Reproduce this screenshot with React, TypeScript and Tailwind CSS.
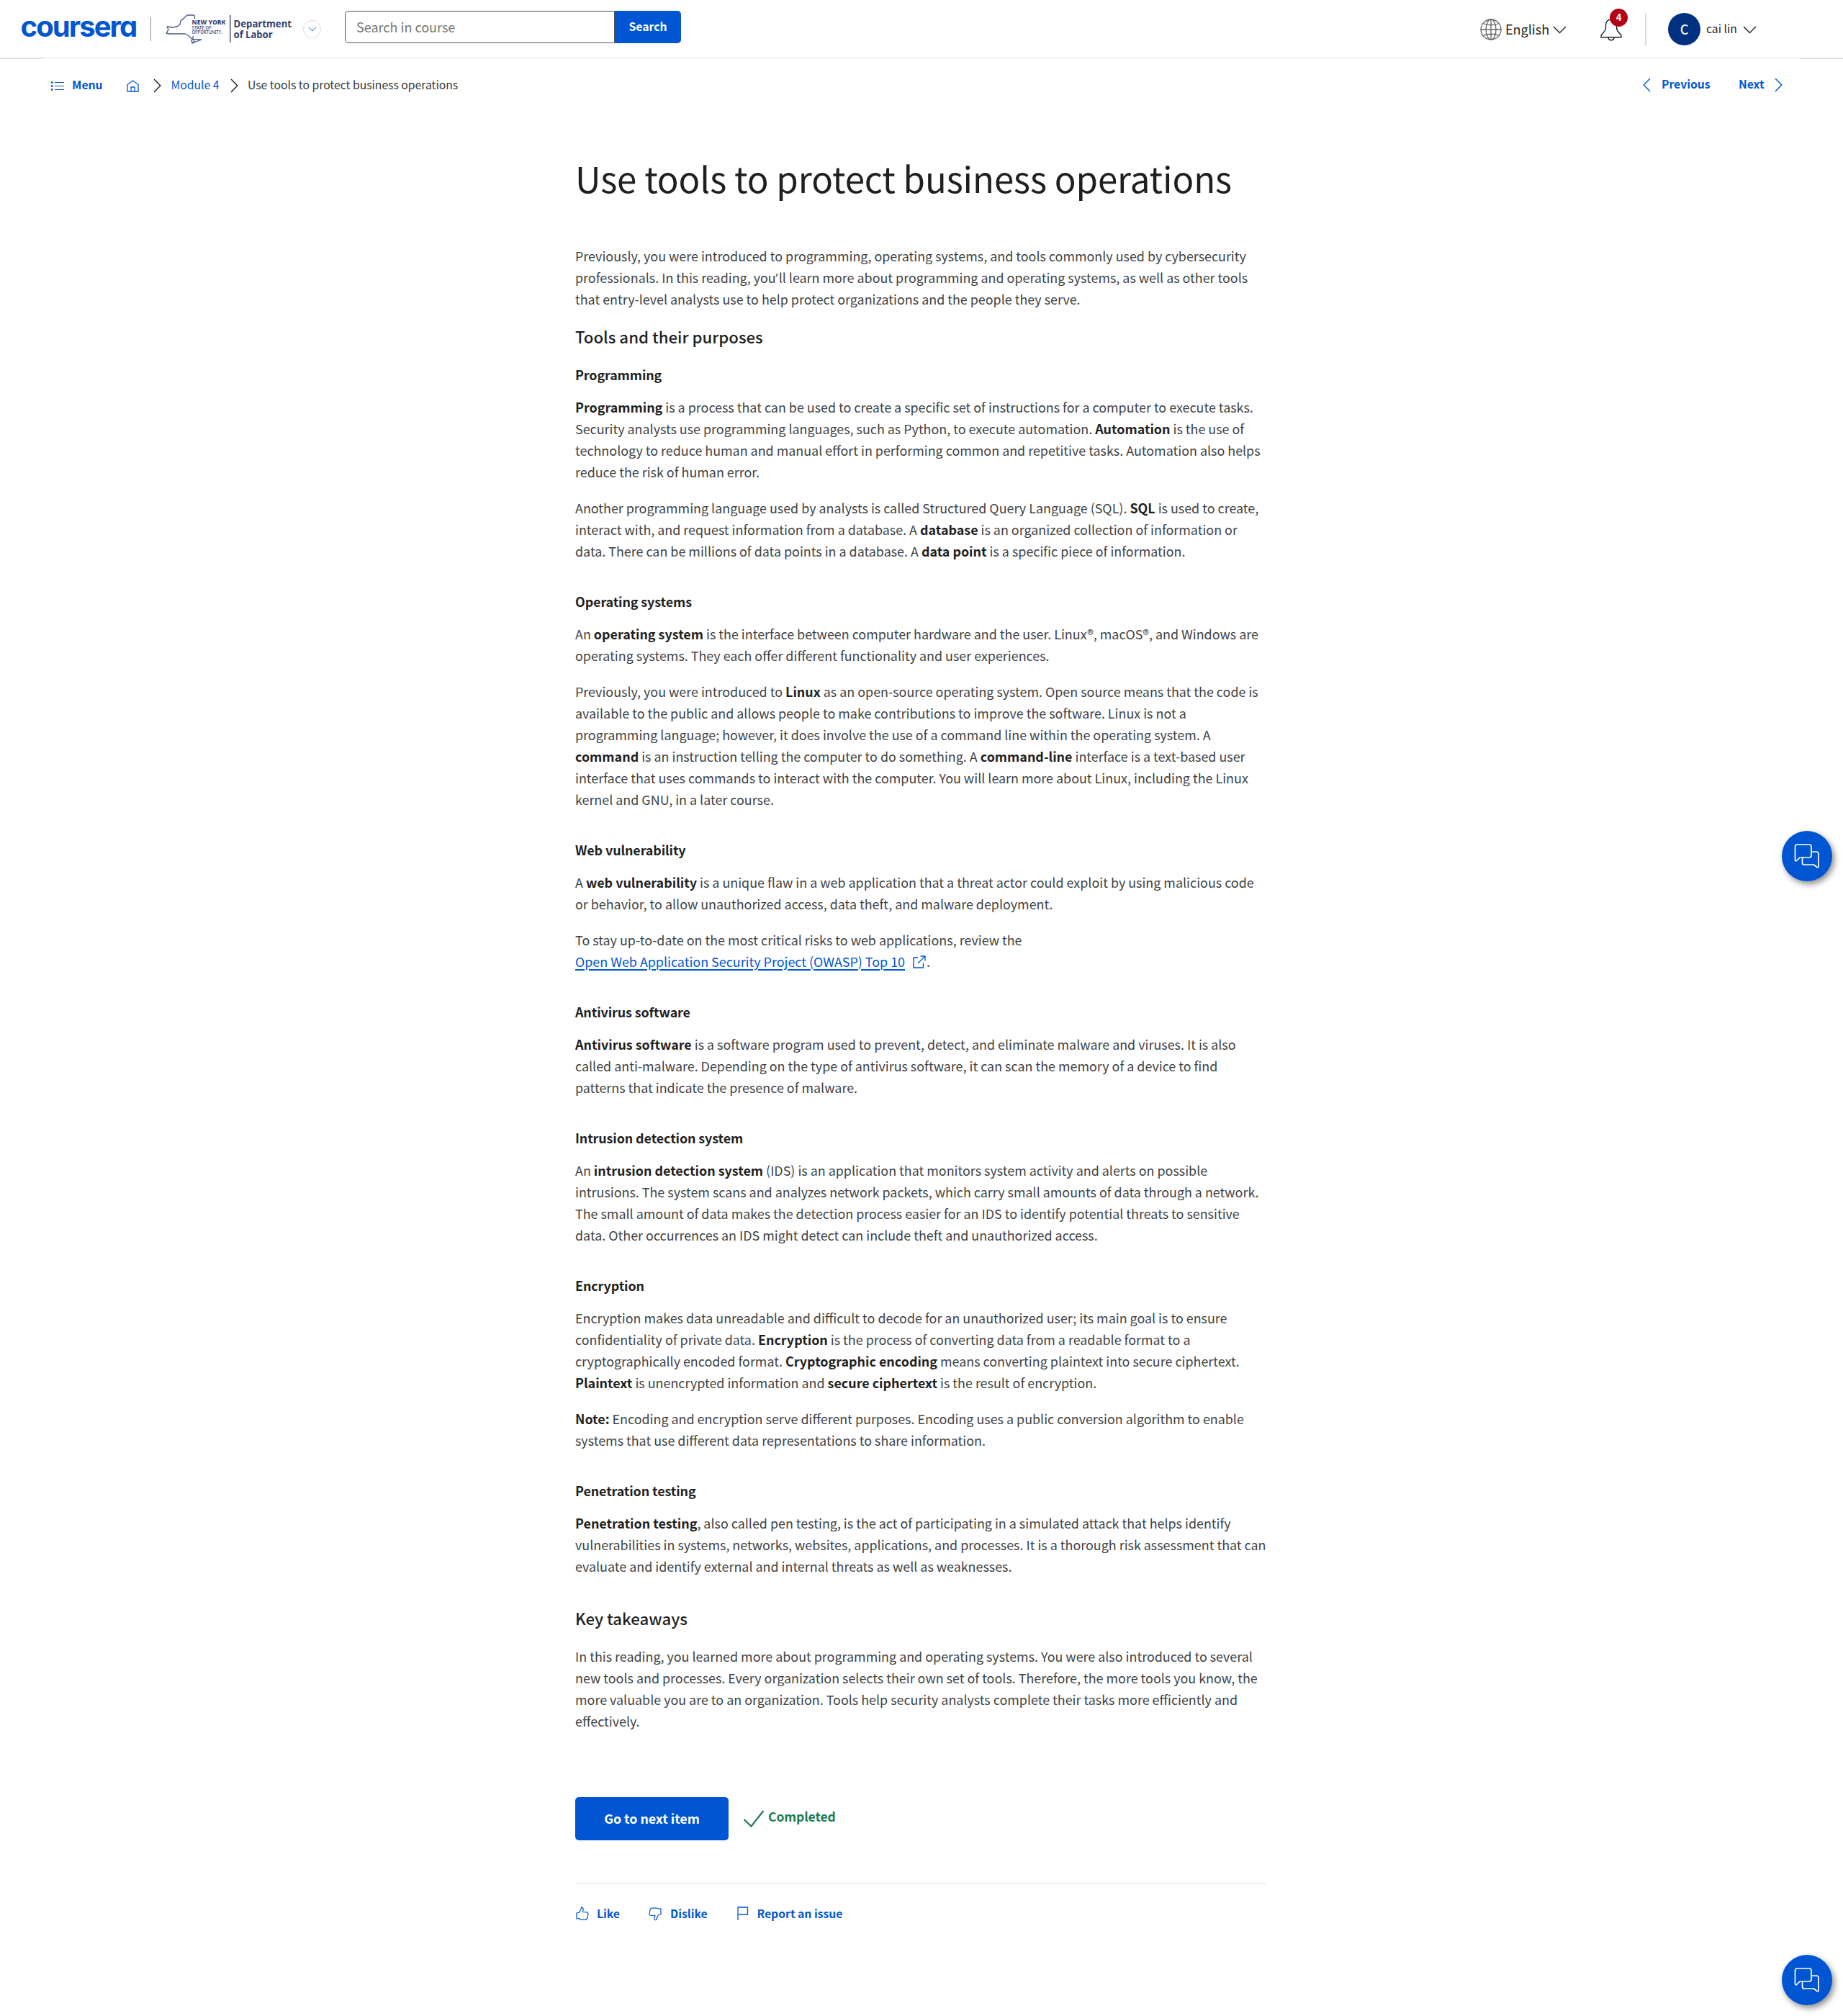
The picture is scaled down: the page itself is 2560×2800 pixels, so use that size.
import type { ReactNode } from "react";

const small = "text-[15.7px] leading-[23px] whitespace-nowrap";

function Chevron({ dir, className }: { dir: "left" | "right" | "down"; className: string }) {
  const d = { left: "M10 1 1.2 10 10 19", right: "M1 1 9.8 10 1 19", down: "M1 1 9.5 9.6 18 1" }[dir];
  return (
    <svg viewBox={dir === "down" ? "0 0 19 11" : "0 0 11 20"} className={className} fill="none" stroke="currentColor" strokeWidth="1.4">
      <path d={d} />
    </svg>
  );
}

function StateLogo() {
  return (
    <svg width="182" height="42" viewBox="0 0 182 42" className="mt-[19px] ml-[17px] overflow-visible" fontFamily="'Noto Sans', sans-serif" fill="#35426f">
      <g fill="none" stroke="#4a5884" strokeWidth="1.3" strokeLinejoin="round">
        <path d="M43.500 7V3L42 2H33L24 10l-1 5-4 3-6 1-8-1 2 4-3 5 4 1h22l4 2 6 5 2 2" />
        <path d="M41 31v4l-2 2 1 4 13-5-6 0-6 0M40 40l4-2" />
      </g>
      <text x="39.500" y="15" fontSize="9.400" fontWeight="800" textLength="47" lengthAdjust="spacingAndGlyphs">NEW YORK</text>
      <text x="39.500" y="22.300" fontSize="6.200" fontWeight="500" textLength="27" lengthAdjust="spacingAndGlyphs">STATE OF</text>
      <text x="39.500" y="28.200" fontSize="6.200" fontWeight="500" textLength="42" lengthAdjust="spacingAndGlyphs">OPPORTUNITY.</text>
      <rect x="92" y="2" width="1.400" height="38" />
      <text x="97.500" y="19" fontSize="15" fontWeight="700" textLength="80.500" lengthAdjust="spacingAndGlyphs">Department</text>
      <text x="97.500" y="33.500" fontSize="15" fontWeight="700" textLength="54" lengthAdjust="spacingAndGlyphs">of Labor</text>
    </svg>
  );
}

function Header() {
  return (
    <header className="flex h-20 items-start">
      <span className="ml-[28.500px] mt-[14px] h-[50px] w-[165.500px] whitespace-nowrap font-['Inter'] text-[40px] leading-[46px] font-bold tracking-[-1.9px] text-[#0056d2] [font-feature-settings:'cv11']">
        coursera
      </span>
      <div className="ml-[15px] mt-6 h-[33px] w-px bg-[#8a8a8a]" />
      <StateLogo />
      <div className="mt-7 ml-[12px] flex size-[25px] items-center justify-center rounded-full border border-[#dadada] text-[#0056d2]">
        <Chevron dir="down" className="h-[7px] w-[12px]" />
      </div>
      <div className="mt-[15px] ml-[33px] flex h-[45px]">
        <div className="w-[375px] rounded-l-[5px] border border-[#525252] pt-[8px] pl-[15px] text-lg leading-[26px] text-[#757575]">Search in course</div>
        <button className="w-[92px] rounded-r-[5px] bg-[#0056d2] pb-[3px] text-[15.7px] leading-[23px] font-bold text-white">Search</button>
      </div>
      <div className="ml-auto flex items-start">
        <svg width="30" height="30" viewBox="0 0 30 30" className="mt-[26px]" fill="none" stroke="#636363" strokeWidth="1.300">
          <circle cx="15" cy="15" r="14" />
          <ellipse cx="15" cy="15" rx="7" ry="14" />
          <path d="M15 1v28M1 15h28M4 6.500c6 3 16 3 22 0M4 23.500c6-3 16-3 22 0" />
        </svg>
        <span className="mt-[27px] ml-[5.500px] w-[62px] text-lg leading-[26px] whitespace-nowrap">English</span>
        <Chevron dir="down" className="mt-[36px] ml-[4px] h-[11px] w-[19px]" />
        <div className="relative mt-[26px] ml-[47px] h-[31px] w-[30px]">
          <svg width="30" height="31" viewBox="0 0 30 31" fill="none" stroke="#1f1f1f" strokeWidth="1.400" strokeLinejoin="round">
            <path d="M15 1c-5 0-7.500 3.500-7.500 8v3.500c0 3.500-1.500 5-3.500 7-2 1.800-3 2.500-3 5V25.800h28V24.500c0-2.500-1-3.200-3-5-2-2-3.500-3.500-3.500-7V9c0-4.500-2.500-8-7.500-8ZM11 26c0 5 8 5 8 0" />
          </svg>
          <span className="absolute -top-[14px] left-[13px] flex size-[25px] items-center justify-center rounded-full bg-[#b30015] pb-[2px] text-[13px] leading-none font-bold text-white">4</span>
        </div>
        <div className="mt-[18px] ml-[32px] h-[45px] w-[2px] bg-[#dadada]" />
        <div className="mt-[18px] ml-[30px] flex size-[45px] items-center justify-center rounded-full bg-[#00307f] pb-px text-[18px] leading-[26px] font-medium text-white">C</div>
        <span className={`${small} mt-7 ml-[8px] w-[43px]`}>cai lin</span>
        <Chevron dir="down" className="mt-[36px] mr-[120px] ml-[8px] h-[11px] w-[19px]" />
      </div>
    </header>
  );
}

function Breadcrumbs() {
  return (
    <nav className="flex h-[78px] items-start pt-[24px] text-[#0056d2]">
      <svg width="18" height="13" viewBox="0 0 18 13" className="mt-[7px] ml-[71px]" fill="none" stroke="currentColor">
        <path d="M5 1.500h13M5 6.500h13M5 11.500h13" strokeWidth="1.200" />
        <path d="M0 1.500h2.500M0 6.500h2.500M0 11.500h2.500" strokeWidth="2.400" />
      </svg>
      <span className={`${small} ml-[11px] w-[43px] font-bold`}>Menu</span>
      <svg width="17" height="17" viewBox="0 0 17 17" className="mt-[5px] ml-[33px]" fill="none" stroke="currentColor" strokeWidth="1.300">
        <path d="M1 16V6.500L8.500 1 16 6.500V16ZM6 16v-6h5v6" />
      </svg>
      <Chevron dir="right" className="mt-[3px] ml-[20px] h-5 w-[11px] text-[#1f1f1f]" />
      <span className={`${small} ml-[13.500px] w-[67px]`}>Module 4</span>
      <Chevron dir="right" className="mt-[3px] ml-[15px] h-5 w-[11px] text-[#1f1f1f]" />
      <span className={`${small} ml-[13.500px] text-[#373a3c]`}>Use tools to protect business operations</span>
      <Chevron dir="left" className="mt-[2px] mr-[15px] ml-auto h-5 w-[11px]" />
      <span className={`${small} -mt-px w-[68px] font-bold`}>Previous</span>
      <span className={`${small} -mt-px ml-[39px] w-[36px] font-bold`}>Next</span>
      <Chevron dir="right" className="mt-[2px] mr-[84px] ml-[14px] h-5 w-[11px]" />
    </nav>
  );
}

const H2 = ({ children, className }: { children: ReactNode; className: string }) => (
  <h2 className={`text-[22.2px] leading-[30px] font-medium ${className}`}>{children}</h2>
);
const H3 = ({ children, first }: { children: ReactNode; first?: boolean }) => (
  <h3 className={`text-[17.9px] leading-[30px] font-bold tracking-[-0.1px] ${first ? "mt-[23px]" : "mt-10"} mb-[15px]`}>{children}</h3>
);
const P = ({ children, next }: { children: ReactNode; next?: boolean }) => (
  <p className={`-mr-1 text-[17.9px] leading-[30px] text-[#404345] ${next ? "mt-5" : ""}`}>{children}</p>
);
const B = ({ children }: { children: ReactNode }) => <strong className="font-bold text-[#1f1f1f]">{children}</strong>;

function Reading() {
  return (
    <article>
      <h1 className="mt-[52px] mb-[59px] text-[49.2px] leading-[69px] tracking-[-0.1px] whitespace-nowrap">Use tools to protect business operations</h1>
      <P>
        Previously, you were introduced to programming, operating systems, and tools commonly used by cybersecurity professionals. In this reading, you<span className="mr-px font-['Open_Sans'] leading-none">’</span>ll learn more about programming and operating systems, as well as other tools <br />that entry-level analysts use to help protect organizations and the people they serve.
      </P>
      <H2 className="mt-[22px]">Tools and their purposes</H2>
      <H3 first>Programming</H3>
      <P>
        <B>Programming</B> is a process that can be used to create a specific set of instructions for a computer to execute tasks. Security analysts use programming languages, such as Python, to execute automation. <B>Automation</B> is the use of technology to reduce human and manual effort in performing common and repetitive tasks. Automation also helps reduce the risk of human error.
      </P>
      <P next>
        Another programming language used by analysts is called Structured Query Language (SQL). <B>SQL</B> is used to create, interact with, and request information from a database. A <B>database</B> is an organized collection of information or data. There can be millions of data points in a database. A <B>data point</B> is a specific piece of information.
      </P>
      <H3>Operating systems</H3>
      <P>
        An <B>operating system</B> is the interface between computer hardware and the user. Linux®, macOS®, and Windows are operating systems. They each offer different functionality and user experiences.
      </P>
      <P next>
        Previously, you were introduced to <B>Linux</B> as an open-source operating system. Open source means that the code is available to the public and allows people to make contributions to improve the software. Linux is not a <br />programming language; however, it does involve the use of a command line within the operating system. A <br /><B>command</B> is an instruction telling the computer to do something. A <B>command-line</B> interface is a text-based user <br />interface that uses commands to interact with the computer. You will learn more about Linux, including the Linux kernel and GNU, in a later course.
      </P>
      <H3>Web vulnerability</H3>
      <P>
        A <B>web vulnerability</B> is a unique flaw in a web application that a threat actor could exploit by using malicious code or behavior, to allow unauthorized access, data theft, and malware deployment.
      </P>
      <P next>
        To stay up-to-date on the most critical risks to web applications, review the
        <br />
        <a className="text-[#0056d2] underline decoration-2 underline-offset-[3px]">Open Web Application Security Project (OWASP) Top 10</a>
        <svg width="18" height="18" viewBox="0 0 18 18" className="mr-px ml-[11px] inline-block align-[-2px]" fill="none" stroke="#0056d2" strokeWidth="1.400">
          <path d="M7 3H1v14h13.500V10.500M10.500 1H17v6.500M17 1 7 11" />
        </svg>
        .
      </P>
      <H3>Antivirus software</H3>
      <P>
        <B>Antivirus software</B> is a software program used to prevent, detect, and eliminate malware and viruses. It is also <br />called anti-malware. Depending on the type of antivirus software, it can scan the memory of a device to find <br />patterns that indicate the presence of malware.
      </P>
      <H3>Intrusion detection system</H3>
      <P>
        An <B>intrusion detection system</B> (IDS) is an application that monitors system activity and alerts on possible <br />intrusions. The system scans and analyzes network packets, which carry small amounts of data through a network. The small amount of data makes the detection process easier for an IDS to identify potential threats to sensitive <br />data. Other occurrences an IDS might detect can include theft and unauthorized access.
      </P>
      <H3>Encryption</H3>
      <P>
        Encryption makes data unreadable and difficult to decode for an unauthorized user; its main goal is to ensure <br />confidentiality of private data. <B>Encryption</B> is the process of converting data from a readable format to a <br />cryptographically encoded format. <B>Cryptographic encoding</B> means converting plaintext into secure ciphertext. <br /><B>Plaintext</B> is unencrypted information and <B>secure ciphertext</B> is the result of encryption.
      </P>
      <P next>
        <B>Note:</B> Encoding and encryption serve different purposes. Encoding uses a public conversion algorithm to enable <br />systems that use different data representations to share information.
      </P>
      <H3>Penetration testing</H3>
      <P>
        <B>Penetration testing</B>, also called pen testing, is the act of participating in a simulated attack that helps identify <br />vulnerabilities in systems, networks, websites, applications, and processes. It is a thorough risk assessment that can <br />evaluate and identify external and internal threats as well as weaknesses.
      </P>
      <H2 className="mt-[42px] mb-[23px]">Key takeaways</H2>
      <P>
        In this reading, you learned more about programming and operating systems. You were also introduced to several <br />new tools and processes. Every organization selects their own set of tools. Therefore, the more tools you know, the <br />more valuable you are to an organization. Tools help security analysts complete their tasks more efficiently and <br />effectively.
      </P>
    </article>
  );
}

function Footer() {
  return (
    <>
      <div className="mt-[91px] flex h-[60px] items-start">
        <button className="h-[60px] w-[213px] rounded-[5px] bg-[#0056d2] pb-[3px] text-[17.8px] leading-[30px] font-bold text-white">Go to next item</button>
        <svg width="30" height="25" viewBox="0 0 30 25" className="mt-[17.500px] ml-5" fill="none" stroke="#1d7c50" strokeWidth="2.200">
          <path d="M1.500 13 11.500 22.500 28.500 1" />
        </svg>
        <span className="mt-[14px] ml-[5px] text-[17.5px] leading-[26px] font-bold tracking-[-0.1px] text-[#1d7c50]">Completed</span>
      </div>
      <div className="mt-[60px] flex h-[60px] items-start border-t border-[#dadada] pt-[28px] text-[#0056d2]">
        <svg width="18" height="20" viewBox="0 0 18 20" className="mt-[3px] ml-px" fill="none" stroke="currentColor" strokeWidth="1.250" strokeLinejoin="round">
          <path d="M1 9 4.500 8.200 7 3.500 7.500 1.200C10 .8 10.500 3 10 5L9 7.500l7 .3 1 1.700L16 16l-2 2H6.500L4.500 16.500 1 17Z" />
        </svg>
        <span className={`${small} mt-px ml-[11px] w-[33px] font-bold`}>Like</span>
        <svg width="18" height="20" viewBox="0 0 18 20" className="mt-[3px] ml-[39px]" fill="none" stroke="currentColor" strokeWidth="1.250" strokeLinejoin="round">
          <path d="M17 11 13.500 11.500 11 16.500 10.500 18.500C8 19 7.500 17 8 15L9 12.500l-7-.3L1 10.500 2 4l2-2h7.500L13.500 3 17 3Z" />
        </svg>
        <span className={`${small} mt-px ml-[12px] w-[52px] font-bold`}>Dislike</span>
        <svg width="16" height="20" viewBox="0 0 16 20" className="mt-[3px] ml-[41px]" fill="none" stroke="currentColor" strokeWidth="1.300">
          <path d="M1 19V1h13.500v10H1" />
        </svg>
        <span className={`${small} mt-px ml-[11.5px] font-bold`}>Report an issue</span>
      </div>
    </>
  );
}

function ChatButton({ className }: { className: string }) {
  return (
    <button className={`absolute left-[2475px] flex size-[70px] items-center justify-center rounded-full bg-[#0056d2] shadow-[3px_4px_9px_rgba(0,0,0,0.45)] ${className}`}>
      <svg width="36" height="36" viewBox="0 0 36 36" fill="none" stroke="#fff" strokeWidth="1.700" strokeLinejoin="round">
        <path d="M4 2h17q3 0 3 3v12q0 3-3 3H8l-4.500 4.500Q1.500 25.500 1.500 23V5q0-3 2.500-3Z" />
        <path d="M24 12h7q3 0 3 3v17q0 2.500-2 1.500L27.500 30H14q-2.500 0-2.500-3v-7" />
      </svg>
    </button>
  );
}

export default function App() {
  return (
    <div className="relative h-[2800px] w-[2560px] overflow-hidden bg-white font-['Noto_Sans_CJK_SC',sans-serif] text-[#1f1f1f]">
      <Header />
      <div className="flex h-[2px] items-start bg-[#e1e1e1] px-[60px]">
        <div className="mt-px h-px flex-1 bg-white" />
      </div>
      <Breadcrumbs />
      <main className="mx-auto w-[960px] -translate-x-px">
        <Reading />
        <Footer />
      </main>
      <ChatButton className="top-[1154px]" />
      <ChatButton className="top-[2715px]" />
    </div>
  );
}
